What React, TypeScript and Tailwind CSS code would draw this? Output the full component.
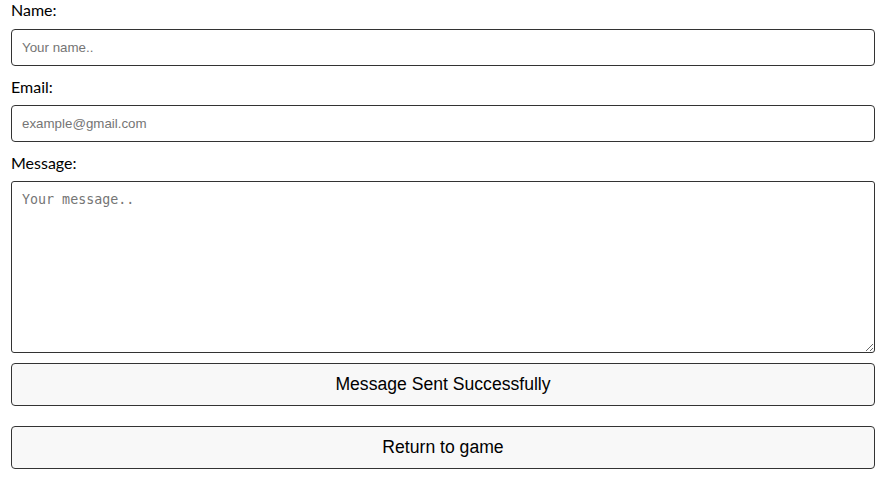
export default function App() {
  const lato = { fontFamily: 'Lato, "Liberation Sans", sans-serif' };
  return (
    <div className="w-[892px] h-[486px] bg-white">
      <form className="w-[864px] ml-[11px] flex flex-col" onSubmit={(e) => e.preventDefault()}>
        <label className="text-[16px] leading-[20px] text-black mt-[0px]" style={lato}>Name:</label>
        <input
          className="mt-[9px] h-[37px] w-full border border-[#333] rounded-[4px] px-[10px] text-[13.33px] text-black placeholder:text-[#757575] font-['Liberation_Sans',Arial,sans-serif] outline-none"
          placeholder="Your name.."
        />
        <label className="text-[16px] leading-[20px] text-black mt-[11px]" style={lato}>Email:</label>
        <input
          className="mt-[8px] h-[37px] w-full border border-[#333] rounded-[4px] px-[10px] text-[13.33px] text-black placeholder:text-[#757575] font-['Liberation_Sans',Arial,sans-serif] outline-none"
          placeholder="example@gmail.com"
        />
        <label className="text-[16px] leading-[20px] text-black mt-[11px]" style={lato}>Message:</label>
        <textarea
          className="mt-[8px] h-[172px] w-full border border-[#333] rounded-[3px] px-[10px] py-[8px] text-[13.33px] leading-[19px] text-black placeholder:text-[#757575] font-['DejaVu_Sans_Mono',monospace] outline-none block"
          placeholder="Your message.."
        />
        <button
          type="button"
          className="mt-[10px] h-[43px] w-full border border-[#333] rounded-[4px] bg-[#f8f8f8] text-[17.6px] text-black font-['Liberation_Sans',Arial,sans-serif]"
        >
          Message Sent Successfully
        </button>
        <button
          type="button"
          className="mt-[20px] h-[43px] w-full border border-[#333] rounded-[4px] bg-[#f8f8f8] text-[17.6px] text-black font-['Liberation_Sans',Arial,sans-serif]"
        >
          Return to game
        </button>
      </form>
    </div>
  );
}
